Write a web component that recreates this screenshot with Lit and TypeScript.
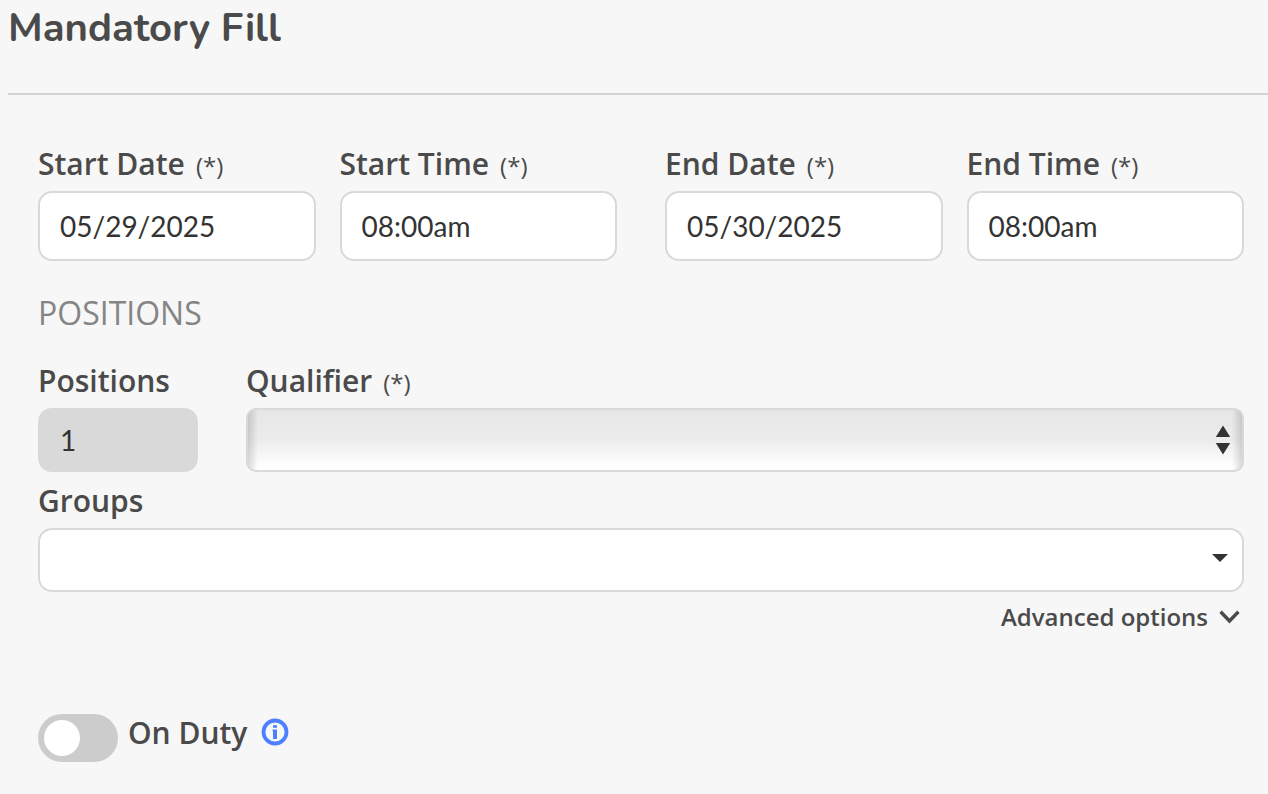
import { LitElement, html, css, nothing } from "lit";
import { customElement, property, state } from "lit/decorators.js";

@customElement("field-label")
class FieldLabel extends LitElement {
  @property() text = "";
  @property({ type: Boolean }) required = false;

  static styles = css`
    :host {
      display: flex;
      align-items: baseline;
      gap: 11px;
      font: 600 30px/40px "Open Sans", sans-serif;
      color: #4a4a4a;
      white-space: nowrap;
    }
    .mark {
      font-size: 24px;
      line-height: 24px;
      font-weight: 400;
    }
  `;

  render() {
    return html`<span>${this.text}</span>${this.required ? html`<span class="mark">(*)</span>` : nothing}`;
  }
}

@customElement("app-root")
class AppRoot extends LitElement {
  @state() private advanced = false;

  private periods = [
    [
      { id: "start-date", label: "Start Date", value: "05/29/2025" },
      { id: "start-time", label: "Start Time", value: "08:00am" },
    ],
    [
      { id: "end-date", label: "End Date", value: "05/30/2025" },
      { id: "end-time", label: "End Time", value: "08:00am" },
    ],
  ];

  static styles = css`
    :host {
      display: block;
      box-sizing: border-box;
      min-height: 100vh;
      padding-left: 8px;
      background: #f7f7f7;
      color: #4a4a4a;
      font-family: "Open Sans", sans-serif;
    }
    * {
      box-sizing: border-box;
    }
    .header {
      padding: 4px 0 41px;
      border-bottom: 2px solid #d3d3d3;
    }
    .title {
      margin: 0;
      font: 700 40px/48px Nunito, "Open Sans", sans-serif;
    }
    .form {
      padding: 49px 24px 32px 30px;
    }
    .periods,
    .position {
      display: grid;
      gap: 48px;
    }
    .periods {
      grid-template-columns: 1fr 1fr;
    }
    .pair {
      display: grid;
      grid-template-columns: 1fr 1fr;
      gap: 24px;
    }
    .field {
      min-width: 0;
    }
    .field label {
      display: block;
      padding-bottom: 7px;
    }
    .input,
    .select {
      display: block;
      width: 100%;
      margin: 0;
      border: 2px solid #d9d9d9;
      border-radius: 14px;
      background: #fff;
      color: #333;
      outline-color: #4d80ff;
    }
    .input {
      height: 70px;
      padding: 0 20px;
      font: 400 28px/36px Lato, sans-serif;
    }
    .count {
      height: 64px;
      border-color: #d9d9d9;
      background: #d9d9d9;
    }
    .section {
      margin: 0;
      padding: 30px 0 26px;
      font-size: 32px;
      line-height: 44px;
      font-weight: 400;
      color: #858585;
    }
    .position {
      grid-template-columns: 160px 1fr;
    }
    .control {
      position: relative;
    }
    .select {
      height: 64px;
      padding: 0 56px 0 20px;
      appearance: none;
      font: 400 28px/36px Lato, sans-serif;
    }
    .glossy {
      border-radius: 10px;
      background:
        linear-gradient(90deg, rgba(0, 0, 0, 0.14), transparent 10px, transparent calc(100% - 10px), rgba(0, 0, 0, 0.14)),
        linear-gradient(#e6e6e6, #ececec 50%, #fff 95%);
    }
    .arrow {
      position: absolute;
      top: 0;
      right: 0;
      width: 48px;
      height: 64px;
      pointer-events: none;
      fill: #333;
    }
    .groups {
      padding-top: 9px;
    }
    .more {
      display: flex;
      justify-content: flex-end;
      padding-top: 7px;
    }
    .toggle-more {
      display: flex;
      align-items: center;
      gap: 11px;
      padding: 0 4px 0 0;
      border: 0;
      background: none;
      color: inherit;
      font: 600 24px/36px "Open Sans", sans-serif;
      cursor: pointer;
    }
    .chevron {
      width: 21px;
      height: 14px;
      fill: none;
      stroke: currentColor;
      stroke-width: 3.4;
    }
    .duty {
      display: flex;
      align-items: center;
      gap: 14px;
      padding-top: 78px;
    }
    .duty-label {
      display: flex;
      align-items: center;
      gap: 10px;
      cursor: pointer;
    }
    .duty-text {
      padding-bottom: 10px;
    }
    .switch {
      appearance: none;
      flex: none;
      display: flex;
      width: 80px;
      height: 48px;
      margin: 0;
      padding: 6px;
      border-radius: 24px;
      background: #ccc;
      cursor: pointer;
    }
    .switch::before {
      content: "";
      width: 36px;
      height: 36px;
      border-radius: 50%;
      background: #fff;
    }
    .switch:checked {
      justify-content: flex-end;
      background: #4d80ff;
    }
    .info {
      display: block;
      padding: 0 0 12px;
      border: 0;
      background: none;
      cursor: pointer;
    }
    .info svg {
      display: block;
      width: 28px;
      height: 28px;
    }
  `;

  render() {
    return html`
      <header class="header"><h1 class="title">Mandatory Fill</h1></header>
      <form class="form" @submit=${(e: Event) => e.preventDefault()}>
        <div class="periods">
          ${this.periods.map(
            (pair) => html`<div class="pair">
              ${pair.map(
                (f) => html`<div class="field">
                  <label for=${f.id}><field-label .text=${f.label} required></field-label></label>
                  <input class="input" id=${f.id} type="text" .value=${f.value} required />
                </div>`
              )}
            </div>`
          )}
        </div>

        <h2 class="section">POSITIONS</h2>
        <div class="position">
          <div class="field">
            <label for="positions"><field-label text="Positions"></field-label></label>
            <input class="input count" id="positions" type="text" value="1" readonly />
          </div>
          <div class="field">
            <label for="qualifier"><field-label text="Qualifier" required></field-label></label>
            <div class="control">
              <select class="select glossy" id="qualifier"><option></option></select>
              <svg class="arrow" viewBox="0 0 48 64" aria-hidden="true">
                <path d="M27 17.5l7.2 11.5H19.8zM19.8 35h14.4L27 46.5z" />
              </svg>
            </div>
          </div>
        </div>
        <div class="field groups">
          <label for="groups"><field-label text="Groups"></field-label></label>
          <div class="control">
            <select class="select" id="groups"><option></option></select>
            <svg class="arrow" viewBox="0 0 48 64" aria-hidden="true"><path d="M16 26h16l-8 8z" /></svg>
          </div>
        </div>

        <div class="more">
          <button
            class="toggle-more"
            type="button"
            aria-expanded=${this.advanced ? "true" : "false"}
            @click=${() => (this.advanced = !this.advanced)}
          >
            Advanced options
            <svg class="chevron" viewBox="0 0 21 14" aria-hidden="true"><path d="M1.6 1.8l8.9 9.2 8.9-9.2" /></svg>
          </button>
        </div>

        <div class="duty">
          <label class="duty-label">
            <input class="switch" type="checkbox" role="switch" />
            <field-label class="duty-text" text="On Duty"></field-label>
          </label>
          <button class="info" type="button" aria-label="About on duty">
            <svg viewBox="0 0 28 28" aria-hidden="true">
              <circle cx="14" cy="14" r="11.5" fill="none" stroke="#4d80ff" stroke-width="3.8" />
              <path d="M12 7.2h4v2.6h-4zM11.6 11.4h4.4v9.6h-4v-7.8h-.4z" fill="#4d80ff" />
            </svg>
          </button>
        </div>
      </form>
    `;
  }
}
